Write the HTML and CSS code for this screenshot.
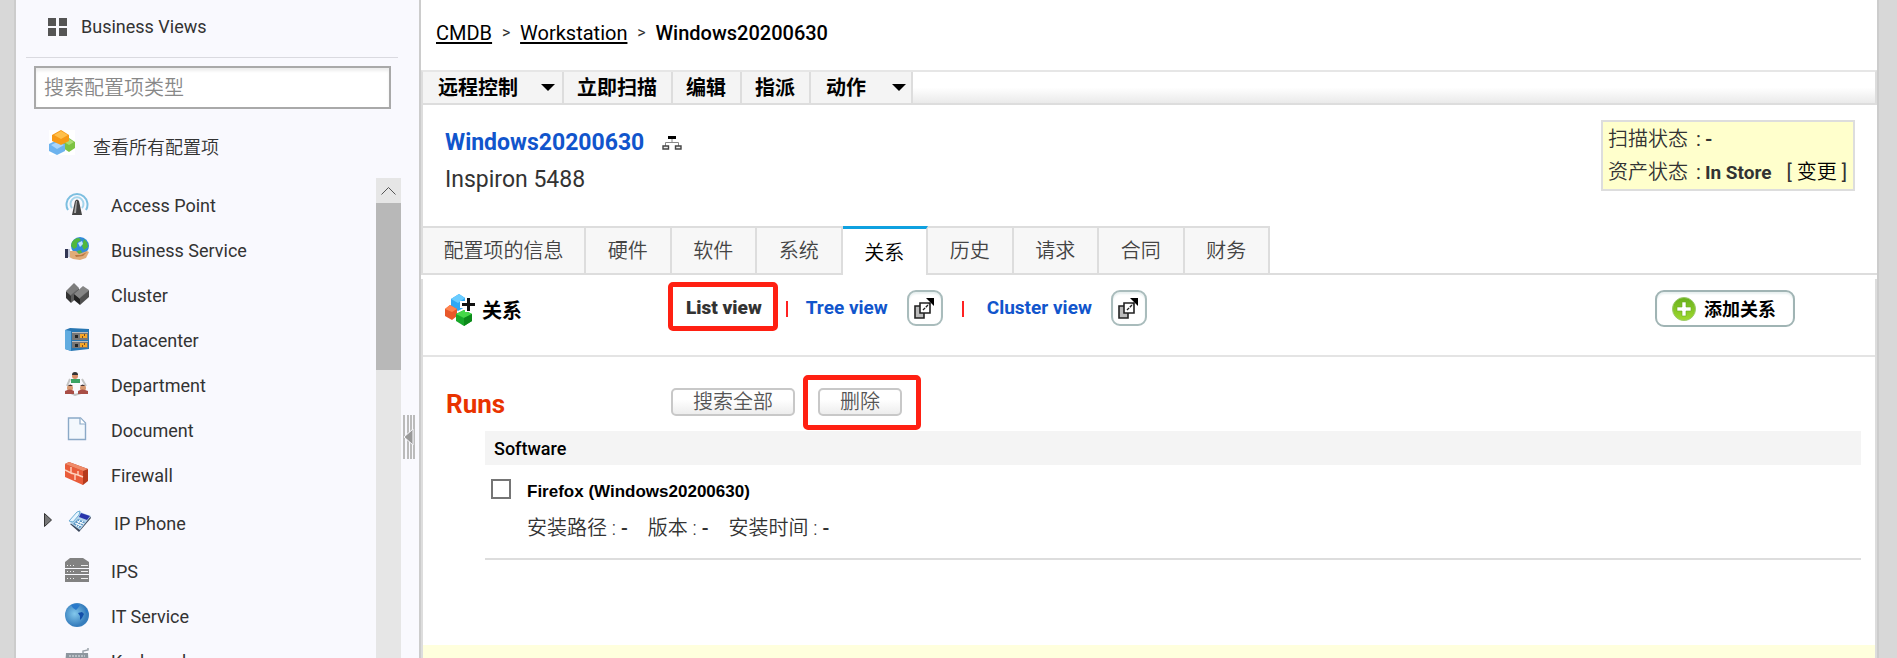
FILE: index.html
```html
<!DOCTYPE html>
<html lang="zh-CN">
<head>
<meta charset="utf-8">
<title>Windows20200630 - CMDB</title>
<link rel="stylesheet" href="styles.css">
</head>
<body>
<div class="page">
  <aside class="sidebar">
    <a class="views" href="#">
      <svg width="19" height="18" viewBox="0 0 19 18" fill="#555"><path d="M0 0h8v8H0zM11 0h8v8h-8zM0 10h8v8H0zM11 10h8v8h-8z"/></svg>
      Business Views
    </a>
    <input class="search" type="text" placeholder="搜索配置项类型" aria-label="搜索配置项类型">
    <a class="all-items" href="#">
      <svg width="26" height="25" viewBox="0 0 26 25"><path fill="#fff" d="M0 0h26v25H0z"/><path fill="#7cc243" d="M14 12l6-4 6 4v6l-6 4-6-4z"/><path fill="#a9dc72" d="M15 12l5-3 5 3-5 3z"/><path fill="#6db3ee" d="M0 14l8-4 8 4v7l-8 4-8-4z"/><path fill="#a8d5fa" d="M2 15l6-3 7 3-7 4z"/><path fill="#f79a16" d="M3 5l9-5 8 5v6l-8 4-9-4z"/><path fill="#ffc04a" d="M5 5l7-4 7 4-7 4z"/></svg>
      <span>查看所有配置项</span>
    </a>
    <div class="types">
      <ul class="type-list">
        <li class="type"><svg width="24" height="24" viewBox="0 0 24 24" fill="none"><path stroke="#7dbfe0" stroke-width="2" d="M3 18A10.500 10.500 0 1 1 21 18"/><path stroke="#a5d5ec" stroke-width="2" d="M7 16a6.500 6.500 0 1 1 10 0"/><path fill="#444" d="M10 9q2-3 4 0l3 14H7z"/><path fill="#aaa" d="M11 9h1l-1 12H9z"/></svg><a href="#">Access Point</a></li>
        <li class="type"><svg width="24" height="24" viewBox="0 0 24 24"><circle cx="15" cy="9" r="9" fill="#318bd9"/><path fill="#51b83c" d="M7 5q3-4 7-4l2 2-4 3 0 4-3 2-3-3zM19 2l3 3 1 5-4 3-2-4zM12 14l4-1 1 3-4 1z"/><path fill="#bfe5fa" d="M13 6l4-2 1 3-3 3z"/><path fill="#e0ac78" d="M4 14l7 0 3 3 8-3 2 1-3 6-6 2-7-1-4-2z"/><path fill="#b87843" d="M10 18h6l6-3-4 4-7 1z"/><path fill="#313653" d="M0 12h3v9H0z"/><path fill="#c4c8d8" d="M3 12h2v8H3z"/></svg><a href="#">Business Service</a></li>
        <li class="type"><svg width="24" height="24" viewBox="0 0 24 24"><path fill="#333" d="M1 9l5 4v8l-5-5z"/><path fill="#7d7d7d" d="M1 9l8-8 5 5-8 8z"/><path fill="#5c5c5c" d="M6 13l8-7v8l-8 7z"/><path fill="#222" d="M9 12l6 4v7l-6-5z"/><path fill="#858585" d="M9 12l9-8 6 4-9 9z"/><path fill="#505050" d="M15 16l9-8v7l-9 8z"/></svg><a href="#">Cluster</a></li>
        <li class="type"><svg width="24" height="24" viewBox="0 0 24 24"><path fill="#2876b2" d="M0 3l5-2 19 1v20L6 24l-6-2z"/><path fill="#61ace0" d="M0 3l6 1v20l-6-2z"/><path fill="#777" d="M7 5h16v8H7zM7 14h16v7H7z"/><path fill="#bbb" d="M7 5h16v1H7zM7 14h16v1H7z"/><path fill="#252525" d="M10 8h3v3h-3zM10 17h3v3h-3z"/><path fill="#f5a629" d="M15 7h7v4h-7zM15 16h7v4h-7z"/><path fill="#805018" d="M17 9h1v2h-1zM19 7h1v2h-1zM17 18h1v2h-1zM19 16h1v2h-1z"/></svg><a href="#">Datacenter</a></li>
        <li class="type"><svg width="24" height="24" viewBox="0 0 24 24"><path fill="none" stroke="#c4c4c4" stroke-width="2" d="M5 7L2 14M17 7l4 7M6 21l4 2 6-2"/><circle cx="10" cy="4" r="3" fill="#d99067"/><path fill="#333" d="M7 3q0-3 3-3t3 3z"/><path fill="#3ba365" d="M6 11V7h9v4z"/><circle cx="5" cy="16" r="3" fill="#d79870"/><circle cx="18" cy="16" r="3" fill="#d79870"/><path fill="#433" d="M3 14q2-3 5 0zM15 14q3-3 5 0z"/><path fill="#a94e46" d="M0 22v-3q5-3 9 0v3zM13 22v-3q4-3 10 0v3z"/></svg><a href="#">Department</a></li>
        <li class="type"><svg width="24" height="24" viewBox="0 0 24 24"><path fill="#f3f8fd" stroke="#8ba9c7" stroke-width="1.400" d="M3.500 1h12l5 5v16.500h-17z"/><path fill="#fff" stroke="#8ba9c7" stroke-width="1.200" d="M15 1v6h5.500"/></svg><a href="#">Document</a></li>
        <li class="type"><svg width="24" height="24" viewBox="0 0 24 24"><path fill="#b63a1c" d="M0 2l4-2 19 7v12l-5 4z"/><path fill="#e95c3a" d="M0 2l18 7v14L0 15z"/><path fill="#f08a68" d="M0 2l4-2 19 7-5 2z"/><path fill="none" stroke="#ffd4bf" stroke-width="1.400" d="M0 8l6 3V5M6 11l7 2v-4M13 13l5 2M10 12v6"/></svg><a href="#">Firewall</a></li>
        <li class="type type-parent"><svg class="expander" width="9" height="14" viewBox="0 0 9 14"><path fill="#777" stroke="#333" d="M.5.5l7 6.500-7 6.500z"/></svg><svg width="24" height="24" viewBox="0 0 24 24"><path fill="#39465a" d="M2 14l9 8 12-14-1-2z"/><path fill="#b4d4eb" d="M2 13L12 2l11 4-11 14z"/><path fill="#2a35ab" d="M13 3l9 3-3 4-8-3z"/><path fill="#5d99c7" d="M10 9l7 3-5 6-7-4z"/><path stroke="#fff" d="M9 11l7 3M7 13l7 3M12 10l-4 6M15 11l-5 6"/><path fill="#e7f5ff" stroke="#6daed5" d="M1 11L9 2l3-1-1 4-6 7z"/></svg><a href="#">IP Phone</a></li>
        <li class="type"><svg width="24" height="24" viewBox="0 0 24 24"><path fill="#828282" d="M0 4l5-4h13l6 4v6H0zM0 11h24v5H0zM0 17h24v7H0z"/><path fill="#eee" d="M2 7h1v1H2zM5 7h1v1H5zM8 7h1v1H8zM16 7h7v1h-7zM2 13h1v1H2zM5 13h1v1H5zM8 13h1v1H8zM16 13h7v1h-7zM2 20h1v1H2zM5 20h1v1H5zM8 20h1v1H8zM16 20h7v1h-7z"/></svg><a href="#">IPS</a></li>
        <li class="type"><svg width="24" height="24" viewBox="0 0 24 24"><defs><radialGradient id="globe" cx=".4" cy=".45"><stop offset="0" stop-color="#83c8ec"/><stop offset="1" stop-color="#377ebd"/></radialGradient></defs><circle cx="12" cy="12" r="12" fill="url(#globe)"/><path fill="#2879cb" d="M6 2q5-2 9 0l-2 3-2 2-3-2zM20 5l3 4-2 1z"/><path fill="#124faa" d="M13 10l4-1 2 2-2 4-2 2 0-4z"/></svg><a href="#">IT Service</a></li>
        <li class="type"><svg width="24" height="24" viewBox="0 0 24 24"><path fill="none" stroke="#9ba3aa" stroke-width="1.500" d="M18 6V3l5-1V0"/><path fill="#8d969e" d="M1 5h22l1 14H0z"/><path stroke="#e5eaee" stroke-dasharray="2 1" d="M4 8h16M3 12h18M3 15h18"/></svg><a href="#">Keyboard</a></li>
      </ul>
      <div class="scrollbar">
        <button class="scroll-up" aria-label="Scroll up"><svg width="15" height="9" viewBox="0 0 15 9" fill="none" stroke="#555"><path d="M.5 8.500l7-7 7 7"/></svg></button>
        <div class="scroll-thumb"></div>
      </div>
    </div>
    <button class="collapse" aria-label="Collapse"><svg width="12" height="44" viewBox="0 0 12 44"><path fill="#bbb" d="M0 0h2v44H0zM4 0h2v44H4zM7 0h2v44H7zM10 0h2v44h-2z"/><path fill="#999" stroke="#f9f9fe" d="M1 22l9-8v16z"/></svg></button>
  </aside>

  <main class="main">
    <nav class="crumbs"><a href="#">CMDB</a><span class="gt">&gt;</span><a href="#">Workstation</a><span class="gt">&gt;</span><b>Windows20200630</b></nav>
    <div class="toolbar">
      <button class="tool tool-remote">远程控制<i class="caret"></i></button>
      <button class="tool">立即扫描</button>
      <button class="tool">编辑</button>
      <button class="tool">指派</button>
      <button class="tool tool-menu">动作<i class="caret"></i></button>
    </div>
    <header class="asset">
      <div>
        <h1 class="asset-name">Windows20200630
          <svg width="20" height="14" viewBox="0 0 20 14" fill="none"><path fill="#000" d="M6 0h8v3H6z"/><path stroke="#888" d="M10 3v4M3.500 10V6.500h13V10"/><path fill="#eee" stroke="#444" stroke-width="1.400" d="M1 10h5.500v3H1zM13.500 10H19v3h-5.500z"/></svg>
        </h1>
        <p class="model">Inspiron 5488</p>
      </div>
      <div class="status">
        <div><span class="status-label">扫描状态</span><span class="colon">:</span><b>-</b></div>
        <div><span class="status-label">资产状态</span><span class="colon">:</span><b>In Store</b><span class="change">[ <a href="#">变更</a> ]</span></div>
      </div>
    </header>
    <nav class="tabs">
      <div class="tab-row">
        <button class="tab tab-wide">配置项的信息</button>
        <button class="tab">硬件</button>
        <button class="tab">软件</button>
        <button class="tab">系统</button>
        <button class="tab tab-active">关系</button>
        <button class="tab">历史</button>
        <button class="tab">请求</button>
        <button class="tab">合同</button>
        <button class="tab">财务</button>
      </div>
    </nav>
    <div class="panel">
      <section class="relations">
        <h2 class="relations-title">
          <svg width="30" height="34" viewBox="0 0 30 34"><path fill="#2ea8f5" d="M6 6l8-5 6 4v9l-7 4-7-4z"/><path fill="#6accff" d="M6 6l8-5 6 4-7 5z"/><path fill="#e8582a" d="M0 16l5-4 7 4v7l-5 4-7-4z"/><path fill="#ff8450" d="M0 16l5-4 7 4-5 3z"/><path fill="#18a82a" d="M11 21l8-4 8 4v7l-8 5-8-5z"/><path fill="#45d848" d="M11 21l8-4 8 4-8 4z"/><path fill="#0c8a1a" d="M19 25l8-4v7l-8 5z"/><path fill="#fff" d="M20 3h7v5h3v7h-3v4h-7v-4h-5V8h5z"/><path fill="#111" d="M22 5h3v5h5v3h-5v5h-3v-5h-5v-3h5z"/></svg>
          <span>关系</span>
        </h2>
        <div class="view-switch">
          <b class="marked marked-view">List view</b>
          <i class="bar"></i>
          <a class="view-link" href="#">Tree view</a>
          <button class="popout" aria-label="Open tree view"><svg width="21" height="21" viewBox="0 0 21 21"><path fill="#bbb" stroke="#222" stroke-width="1.600" d="M1 8h9v12H1z"/><path fill="#fff" stroke="#222" stroke-width="1.600" d="M6 5h10v10H6z"/><path stroke="#222" stroke-width="1.400" stroke-dasharray="3 1" d="M9 12l7-7"/><path d="M12 0h8v8z"/></svg></button>
          <i class="bar"></i>
          <a class="view-link" href="#">Cluster view</a>
          <button class="popout" aria-label="Open cluster view"><svg width="21" height="21" viewBox="0 0 21 21"><path fill="#bbb" stroke="#222" stroke-width="1.600" d="M1 8h9v12H1z"/><path fill="#fff" stroke="#222" stroke-width="1.600" d="M6 5h10v10H6z"/><path stroke="#222" stroke-width="1.400" stroke-dasharray="3 1" d="M9 12l7-7"/><path d="M12 0h8v8z"/></svg></button>
        </div>
        <button class="add"><svg width="24" height="24" viewBox="0 0 24 24"><defs><linearGradient id="green" x2="0" y2="1"><stop offset="0" stop-color="#67b01c"/><stop offset="1" stop-color="#a0da2e"/></linearGradient></defs><circle cx="12" cy="12" r="11.500" fill="url(#green)" stroke="#9cc96c"/><path fill="#fff" stroke="#69a91f" stroke-width=".6" d="M10 5h4v5h5v4h-5v5h-4v-5H5v-4h5z"/></svg><span>添加关系</span></button>
      </section>
      <section class="runs">
        <div class="runs-head">
          <h2 class="runs-title">Runs</h2>
          <button class="small-btn">搜索全部</button>
          <span class="marked marked-delete"><button class="small-btn">删除</button></span>
        </div>
        <div class="runs-body">
          <h3 class="group">Software</h3>
          <div class="item">
            <input class="check" type="checkbox" id="firefox">
            <div>
              <label class="item-name" for="firefox">Firefox (Windows20200630)</label>
              <p class="details"><span>安装路径 : <b>-</b></span><span>版本 : <b>-</b></span><span>安装时间 : <b>-</b></span></p>
            </div>
          </div>
        </div>
      </section>
      <div class="notice"></div>
    </div>
  </main>
</div>
</body>
</html>
```
FILE: styles.css
```css
* { box-sizing: border-box; }
body {
  margin: 0;
  background: #d8d8d8;
  color: #333;
  font: 18px/24px Roboto, "Noto Sans CJK SC", sans-serif;
}
a { color: inherit; text-decoration: none; }
h1, h2, h3, p, ul { margin: 0; padding: 0; }
ul { list-style: none; }
button { margin: 0; padding: 0; border: 0; background: none; color: inherit; font: inherit; }
svg { display: block; flex: none; }

.page {
  display: grid;
  grid-template-columns: 405px 1fr;
  height: 100vh;
  margin: 0 18px 0 14px;
  border: solid #ccc;
  border-width: 0 2px;
  background: #fff;
  overflow: hidden;
}

/* sidebar */
.sidebar {
  position: relative;
  display: flex;
  flex-direction: column;
  min-height: 0;
  background: #f9f9fe;
  border-right: 2px solid #ccc;
}
.views {
  display: flex;
  align-items: center;
  gap: 14px;
  height: 58px;
  margin: 0 21px 0 10px;
  padding: 0 0 4px 22px;
  border-bottom: 1px solid #dadae0;
}
.search {
  height: 43px;
  margin: 8px 28px 0 18px;
  padding: 0 8px;
  border: 2px solid #a9a9a9;
  background: #fff;
  box-shadow: inset 0 3px 3px #eee;
  font: 350 20px/24px Roboto, "Noto Sans CJK SC", sans-serif;
}
.search::placeholder { color: #888; opacity: 1; }
.all-items {
  display: flex;
  gap: 18px;
  margin: 21px 0 0 33px;
  font-weight: 350;
  line-height: 36px;
}
.types {
  display: flex;
  flex: 1;
  min-height: 0;
  margin: 12px 18px 0 0;
  overflow: hidden;
}
.type-list { flex: 1; padding-top: 4px; }
.type {
  position: relative;
  display: flex;
  gap: 22px;
  height: 45px;
  padding: 10px 0 0 49px;
}
.type a { padding-top: 2px; }
.type-parent { height: 51px; padding-top: 13px; padding-left: 52px; }
.expander { position: absolute; left: 28px; top: 16px; }
.scrollbar { width: 25px; background: #e6e6e6; }
.scroll-up { display: grid; place-items: center; width: 25px; height: 25px; }
.scroll-thumb { height: 167px; background: #b8b8b8; }
.collapse { position: absolute; right: 4px; top: 415px; }

/* main column */
.main { display: flex; flex-direction: column; min-width: 0; }
.crumbs {
  display: flex;
  align-items: center;
  height: 70px;
  padding: 0 15px 4px;
  color: #000;
  font-size: 20px;
}
.crumbs b { font-weight: 500; }
.crumbs a { text-decoration: underline; text-decoration-thickness: 2px; text-underline-offset: 2px; }
.gt { width: 28px; text-align: center; font-size: 16px; color: #333; }
.toolbar {
  display: flex;
  height: 35px;
  border: 2px solid #ddd;
  border-top-color: #e6e6e6;
  background: linear-gradient(#fff 50%, #eaeaea);
}
.tool {
  display: flex;
  align-items: center;
  padding: 0 14px 0 13px;
  border-right: 2px solid #ddd;
  background: #f4f4f4;
  color: #000;
  font-size: 20px;
  font-weight: 700;
}
.tool-remote { gap: 23px; padding: 0 7px 0 15px; }
.tool-menu { gap: 26px; padding: 0 5px 0 15px; }
.caret { border: solid transparent; border-width: 7px 7px 0; border-top-color: #000; }

.asset {
  display: flex;
  justify-content: space-between;
  height: 121px;
  padding: 15px 22px 0 22px;
  border-left: 2px solid #ddd;
}
.asset-name {
  display: flex;
  align-items: center;
  gap: 18px;
  padding-top: 7px;
  color: #15c;
  font-size: 23px;
  font-weight: 700;
  line-height: 32px;
}
.model { padding-top: 3px; font-size: 23px; line-height: 36px; }
.status {
  align-self: flex-start;
  padding: 1px 6px 0 5px;
  border: 2px solid #ddd;
  background: #ffc;
  font-size: 20px;
  font-weight: 350;
  line-height: 33px;
}
.status b { font-size: 19px; font-weight: 700; }
.colon { padding: 0 4px 0 8px; font-weight: 400; }
.change { margin-left: 15px; font-weight: 400; }
.change a { color: #000; font-weight: 350; }

.tabs { border-bottom: 2px solid #ddd; }
.tab-row { display: flex; width: 849px; }
.tab {
  flex: 1;
  height: 47px;
  border: solid #ddd;
  border-width: 2px 2px 0 0;
  background: #f7f7f7;
  color: #444;
  font-size: 20px;
  font-weight: 350;
}
.tab-wide { flex: 0 0 165px; border-left-width: 2px; }
.tab-active {
  height: 49px;
  margin-bottom: -2px;
  padding-top: 2px;
  border-top: 3px solid #0fa1e0;
  background: #fff;
  color: #000;
}

.panel {
  display: flex;
  flex: 1;
  flex-direction: column;
  margin-top: 4px;
  border: solid #ddd;
  border-width: 0 2px;
}
.relations {
  display: flex;
  align-items: flex-start;
  height: 78px;
  padding: 11px 80px 0 22px;
  border-bottom: 2px solid #e4e4e4;
}
.relations-title {
  display: flex;
  gap: 7px;
  flex: 0 0 241px;
  padding-top: 3px;
  color: #000;
  font-size: 20px;
  line-height: 36px;
}
.view-switch { display: flex; align-items: center; height: 36px; font-size: 19px; font-weight: 700; }
.view-link { color: #15c; font-weight: 700; }
.bar { width: 2px; height: 16px; margin: 2px 18px 0 24px; background: #f22; }
.popout + .bar { margin: 2px 23px 0 19px; }
.marked { position: relative; }
.marked::after {
  content: "";
  position: absolute;
  border: 5px solid #ff2012;
  border-radius: 5px;
  pointer-events: none;
}
.marked-view::after { inset: -14px -16px -11px -18px; }
.popout {
  display: grid;
  place-items: center;
  width: 36px;
  height: 36px;
  margin-left: 19px;
  border: 2px solid #a9bcbc;
  border-radius: 9px;
  background: #fff;
  box-shadow: inset 0 2px 2px #e8f0f0;
}
.add {
  display: flex;
  align-items: center;
  gap: 8px;
  height: 37px;
  margin-left: auto;
  padding: 0 17px 0 15px;
  border: 2px solid #a0b4b4;
  border-radius: 9px;
  background: #fff;
  box-shadow: inset 0 2px 2px #e8f0f0;
  color: #000;
  font-weight: 700;
}
.add span { padding-top: 3px; }

.runs { flex: 1; }
.runs-head { display: flex; align-items: center; gap: 23px; height: 74px; padding: 15px 0 0 23px; }
.runs-title { width: 202px; color: #e93300; font-size: 26px; padding-top: 4px; }
.small-btn {
  display: block;
  height: 28px;
  padding: 0 20px;
  border: 2px solid #c8c8c8;
  border-radius: 5px;
  background: linear-gradient(#fff 40%, #ededed);
  color: #555;
  font-size: 20px;
  font-weight: 350;
  line-height: 24px;
}
.marked-delete::after { inset: -13px -19px -14px -15px; }
.runs-body { margin: 0 14px 0 62px; border-bottom: 2px solid #ddd; }
.group {
  height: 34px;
  padding-left: 9px;
  background: #f4f4f4;
  color: #000;
  font-size: 18px;
  font-weight: 500;
  line-height: 35px;
}
.item { display: flex; gap: 16px; height: 93px; padding: 14px 0 0 6px; }
.check {
  appearance: none;
  width: 20px;
  height: 20px;
  margin: 0;
  border: 2px solid #757575;
  background: #fff;
}
.item-name { display: block; padding-top: 1px; color: #000; font: 700 17px/24px "Liberation Sans", sans-serif; }
.details { display: flex; gap: 20px; padding-top: 8px; font-size: 20px; font-weight: 350; line-height: 32px; }
.details b { font-weight: 500; }
.notice { height: 13px; background: #ffd; }
```
